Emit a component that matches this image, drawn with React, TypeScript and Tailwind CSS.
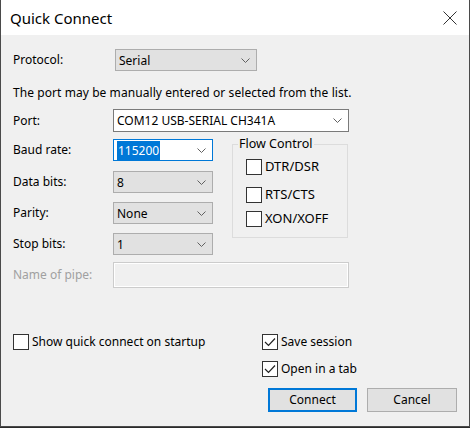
import React from 'react';

const font = "font-['Segoe_UI','Noto_Sans',sans-serif]";

const Chevron = () => (
  <svg width="9" height="5" viewBox="0 0 9 5" className="shrink-0">
    <path d="M0.5 0.5 L4.5 4.5 L8.5 0.5" fill="none" stroke="#606060" strokeWidth="1" />
  </svg>
);

const CheckBox: React.FC<{ checked?: boolean; label: string; big?: boolean }> = ({ checked, label, big }) => (
  <div className="flex items-center h-[16px]">
    <div className="w-[16px] h-[16px] border border-[#333333] bg-white flex items-center justify-center shrink-0">
      {checked && (
        <svg width="12" height="10" viewBox="0 0 12 10">
          <path d="M1 5 L4.5 8.5 L11 1.5" fill="none" stroke="#222" strokeWidth="1.2" />
        </svg>
      )}
    </div>
    <span className={`ml-[3px] ${big ? 'text-[13px]' : 'text-[12px]'} text-black whitespace-nowrap`}>{label}</span>
  </div>
);

// dropdown list style (gray) or editable combo (white)
const Combo: React.FC<{
  value: React.ReactNode;
  width: string;
  variant?: 'list' | 'edit' | 'focus';
  height?: string;
}> = ({ value, width, variant = 'list', height = 'h-[22px]' }) => {
  const look =
    variant === 'list'
      ? 'bg-[#e1e1e1] border-[#adadad]'
      : variant === 'focus'
      ? 'bg-white border-[#0078d7]'
      : 'bg-white border-[#7a7a7a]';
  return (
    <div className={`${width} ${height} ${look} border flex items-center justify-between pl-[3px] pr-[6px]`}>
      <span className="text-[12px] text-black leading-[16px] pt-[1px]">{value}</span>
      <Chevron />
    </div>
  );
};

const Row: React.FC<{ label: string; children: React.ReactNode; className?: string; dim?: boolean }> = ({
  label,
  children,
  className = '',
  dim,
}) => (
  <div className={`flex items-center ${className}`}>
    <span className={`w-[100px] text-[12px] ${dim ? 'text-[#a0a0a0]' : 'text-black'}`}>{label}</span>
    {children}
  </div>
);

export default function App() {
  return (
    <div className={`w-[470px] h-[428px] bg-[#2b2b2b] ${font}`}>
      <div className="w-[470px] h-[427px] border-x border-b border-[#4a4a4a] bg-[#f0f0f0] flex flex-col">
        {/* Title bar */}
        <div className="h-[35px] bg-white flex items-center justify-between pl-[9px] pr-[12px] pt-[1px] shrink-0">
          <span className="text-[15px] text-black">Quick Connect</span>
          <svg width="14" height="14" viewBox="0 0 14 14">
            <path d="M0.5 0.5 L13.5 13.5 M13.5 0.5 L0.5 13.5" stroke="#333" strokeWidth="1" />
          </svg>
        </div>

        {/* Body */}
        <div className="flex-1 flex flex-col pl-[12px] pt-[14px]">
          <Row label="Protocol:" className="h-[22px]">
            <div className="ml-[2px]">
              <Combo value="Serial" width="w-[142px]" />
            </div>
          </Row>

          <p className="mt-[14px] h-[16px] text-[12px] leading-[16px] text-black tracking-[0.07px]">
            The port may be manually entered or selected from the list.
          </p>

          <Row label="Port:" className="mt-[8px]">
            <Combo value="COM12 USB-SERIAL CH341A" width="w-[236px]" variant="edit" height="h-[23px]" />
          </Row>

          <div className="flex mt-[7px]">
            <div className="flex flex-col">
              <Row label="Baud rate:">
                <Combo
                  value={<span className="bg-[#0078d7] text-white px-[1px] py-[1px]">115200</span>}
                  width="w-[100px]"
                  variant="focus"
                />
              </Row>
              <Row label="Data bits:" className="mt-[10px]">
                <Combo value="8" width="w-[100px]" />
              </Row>
              <Row label="Parity:" className="mt-[9px]">
                <Combo value="None" width="w-[100px]" />
              </Row>
              <Row label="Stop bits:" className="mt-[9px]">
                <Combo value="1" width="w-[100px]" />
              </Row>
            </div>

            {/* Flow Control group box */}
            <div className="relative ml-[19px] mt-[5px] w-[116px] h-[94px] border border-[#dcdcdc] pl-[13px] pt-[14px]">
              <span className="absolute left-[5px] top-[-9px] px-[1px] bg-[#f0f0f0] text-[12.5px] leading-[16px] text-black">
                Flow Control
              </span>
              <CheckBox big label="DTR/DSR" />
              <div className="mt-[12px]">
                <CheckBox big label="RTS/CTS" />
              </div>
              <div className="mt-[8px]">
                <CheckBox big label="XON/XOFF" />
              </div>
            </div>
          </div>

          <Row label="Name of pipe:" className="mt-[7px]" dim>
            <div className="w-[236px] h-[26px] border border-[#cccccc] shadow-[inset_0_0_0_1px_#ffffff] bg-[#f0f0f0]" />
          </Row>

          <div className="flex mt-[46px]">
            <div className="w-[249px]">
              <CheckBox label="Show quick connect on startup" />
            </div>
            <div className="flex flex-col">
              <CheckBox checked label="Save session" />
              <div className="mt-[11px]">
                <CheckBox checked label="Open in a tab" />
              </div>
              <div className="flex mt-[11px] ml-[6px]">
                <button className="w-[89px] h-[24px] bg-[#e1e1e1] border border-[#0078d7] shadow-[inset_0_0_0_1px_#0078d7] text-[12px] text-black">
                  Connect
                </button>
                <button className="ml-[10px] w-[90px] h-[24px] bg-[#e1e1e1] border border-[#adadad] text-[12px] text-black">
                  Cancel
                </button>
              </div>
            </div>
          </div>
        </div>
      </div>
    </div>
  );
}
